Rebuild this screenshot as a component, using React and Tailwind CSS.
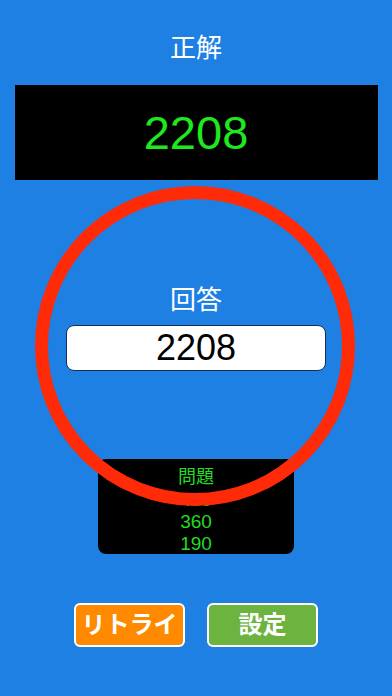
import React from 'react';

const FONT = "font-['Liberation_Sans','Noto_Sans_CJK_JP',sans-serif]";

const PROBLEMS = ['400', '360', '190'];

const App = () => {
  return (
    <div className={`relative w-full min-h-screen bg-[#1e80e3] flex flex-col items-center ${FONT}`}>
      {/* Correct answer */}
      <h1 className="mt-[33px] text-[26px] leading-[30px] text-white">正解</h1>
      <div className="mt-[22px] w-[363px] h-[95px] bg-black flex items-center justify-center">
        <span className="text-[47px] leading-none text-[#1ee81e]">2208</span>
      </div>

      {/* Answer */}
      <div className="mt-[105px] text-[26px] leading-[30px] text-white">回答</div>
      <div className="mt-[10px] w-[260px] h-[46px] rounded-[8px] border border-[#1b2b55] bg-white flex items-center justify-center">
        <span className="text-[36px] leading-none text-black">2208</span>
      </div>

      {/* Problems */}
      <div className="mt-[88px] w-[196px] h-[95px] rounded-lg bg-black flex flex-col items-center pt-[7px]">
        <div className="text-[18px] leading-[23px] text-[#22dc22]">問題</div>
        {PROBLEMS.map((p) => (
          <div key={p} className="text-[19px] leading-[22px] text-[#22dc22]">{p}</div>
        ))}
      </div>

      {/* Buttons */}
      <div className="mt-[49px] flex gap-[22px]">
        <button className="w-[111px] h-[44px] rounded-md border-2 border-white bg-[#ff8a00] text-white text-[24px] font-bold">
          リトライ
        </button>
        <button className="w-[111px] h-[44px] rounded-md border-2 border-white bg-[#6db33f] text-white text-[24px] font-bold">
          設定
        </button>
      </div>

      {/* Correct mark ring */}
      <div className="absolute left-[35px] top-[186px] w-[320px] h-[320px] rounded-full border-[13px] border-[#ff2a08] pointer-events-none" />
    </div>
  );
};

export default App;
